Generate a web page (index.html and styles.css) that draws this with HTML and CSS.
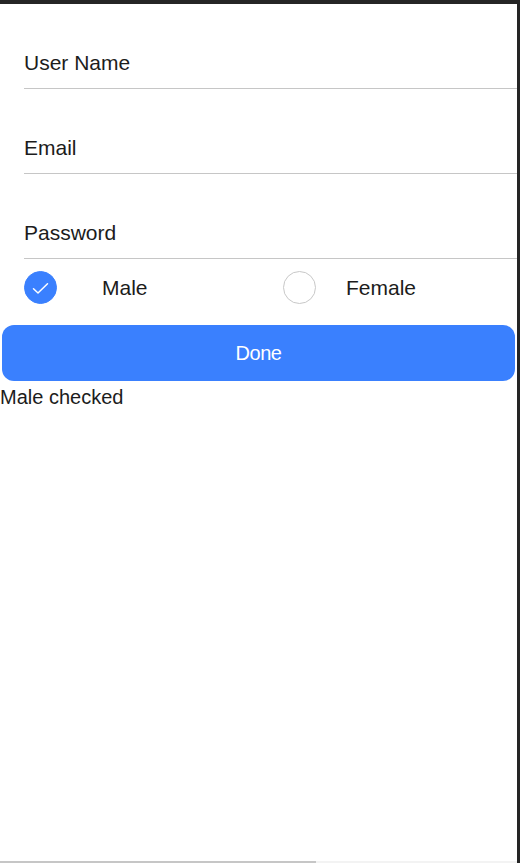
FILE: index.html
```html
<!DOCTYPE html>
<html lang="en">
<head>
<meta charset="utf-8">
<title>Sign up</title>
<link rel="stylesheet" href="styles.css">
</head>
<body>
<div class="frame">
  <form class="form">
    <div class="field"><span class="placeholder">User Name</span></div>
    <div class="field"><span class="placeholder">Email</span></div>
    <div class="field"><span class="placeholder">Password</span></div>
    <div class="radios">
      <label class="radio radio-male">
        <span class="circle checked">
          <svg width="17" height="13" viewBox="0 0 17 13"><path d="M1.5 6.8 L6 11 L15.5 1.8" fill="none" stroke="#fff" stroke-width="1.5" stroke-linecap="round" stroke-linejoin="round"/></svg>
        </span>
        <span class="radio-label male-label">Male</span>
      </label>
      <label class="radio radio-female">
        <span class="circle"></span>
        <span class="radio-label female-label">Female</span>
      </label>
    </div>
    <button type="button" class="done">Done</button>
    <div class="status">Male checked</div>
  </form>
  <div class="spacer"></div>
  <div class="bottombar"><span class="thumb"></span></div>
</div>
</body>
</html>
```
FILE: styles.css
```css
html, body {
  margin: 0;
  padding: 0;
  background: #fff;
}
body {
  font-family: "Liberation Sans", Arial, sans-serif;
  color: #1c1c1c;
}
.frame {
  box-sizing: border-box;
  height: 863px;
  border-top: 4px solid #252525;
  border-right: 3px solid #252525;
  display: flex;
  flex-direction: column;
}
.form {
  display: flex;
  flex-direction: column;
}
.field {
  box-sizing: border-box;
  height: 85px;
  margin-left: 24px;
  border-bottom: 1px solid #c6c6c6;
  display: flex;
  align-items: flex-end;
  padding-bottom: 13px;
}
.placeholder {
  font-size: 21px;
  line-height: 24px;
  color: #1c1c1c;
}
.radios {
  display: flex;
  align-items: center;
  padding: 12px 0 0 24px;
  height: 33px;
}
.radio {
  display: flex;
  align-items: center;
}
.radio-male {
  width: 259px;
}
.circle {
  box-sizing: border-box;
  width: 33px;
  height: 33px;
  border-radius: 50%;
  border: 1px solid #c8c8c8;
  display: flex;
  align-items: center;
  justify-content: center;
  flex: none;
}
.circle.checked {
  background: #3a80fe;
  border-color: #3a80fe;
}
.circle svg {
  margin-top: 1px;
}
.radio-label {
  font-size: 21px;
  line-height: 24px;
}
.male-label {
  margin-left: 45px;
}
.female-label {
  margin-left: 30px;
}
.done {
  margin: 21px 2px 0 2px;
  height: 56px;
  border: none;
  border-radius: 12px;
  background: #3a80fe;
  color: #fff;
  font-family: "Liberation Sans", Arial, sans-serif;
  font-size: 20px;
  letter-spacing: -0.5px;
  padding: 0;
}
.status {
  margin-top: 4px;
  font-size: 20px;
  line-height: 24px;
}
.spacer {
  flex: 1;
}
.bottombar {
  height: 2px;
  background: #f3f3f3;
  display: flex;
}
.thumb {
  width: 316px;
  background: #c6c6c6;
}
```
